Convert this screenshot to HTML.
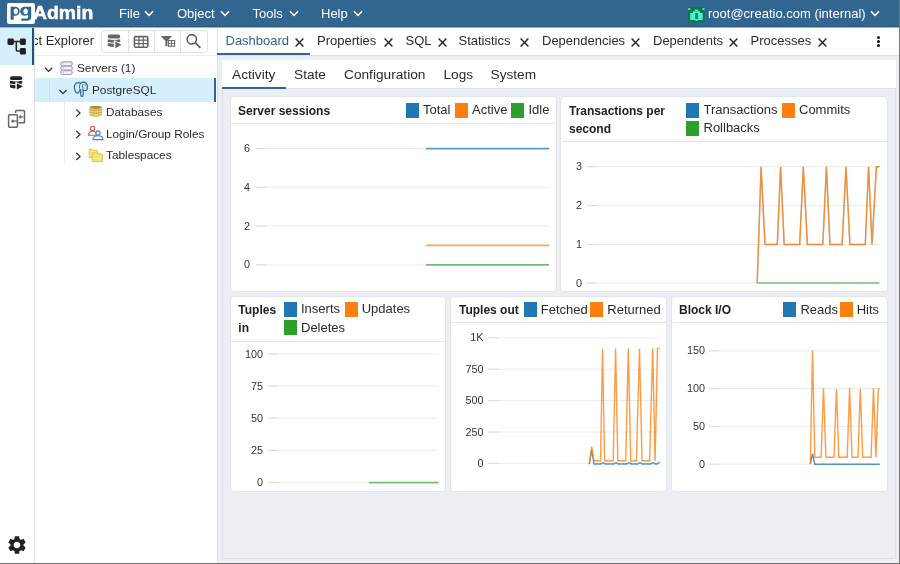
<!DOCTYPE html><html><head><meta charset="utf-8"><style>
*{box-sizing:border-box}
html,body{margin:0;padding:0}
body{width:900px;height:564px;position:relative;overflow:hidden;will-change:transform;background:#fff;font-family:"Liberation Sans",sans-serif;color:#2b2b2b}
.a{position:absolute}
.menu{color:#fff;font-size:13px;top:6px;white-space:nowrap;line-height:15px}
.tree{font-size:11.8px;color:#2b2b2b;white-space:nowrap;line-height:14px}
.tab{font-size:13px;color:#2b2b2b;top:33.3px;white-space:nowrap;line-height:15px}
.st{font-size:13.7px;color:#2b2b2b;top:67px;white-space:nowrap;line-height:16px}
.card{background:#fff;border:1px solid #e2e5ea;border-radius:4px}
.ctitle{font-size:12px;font-weight:bold;color:#222;line-height:18px;white-space:nowrap}
.leg{font-size:13px;color:#2b2b2b;white-space:nowrap;line-height:18px}
.sw{position:absolute;width:13px;height:15px}
.ax{font-size:10.8px;color:#333;text-align:right;white-space:nowrap;line-height:13px}
svg{position:absolute;overflow:visible}
</style></head><body>
<div class="a" style="left:0;top:0;width:899px;height:28px;background:#326690"></div>
<div class="a" style="left:0px;top:26px;width:899px;height:1px;background:#275b88"></div>
<div class="a" style="left:0px;top:27px;width:899px;height:1px;background:#9db3c8"></div>
<div class="a" style="left:7px;top:3px;width:28px;height:21px;background:#fff;border-radius:2px"></div>
<svg style="left:0;top:0" width="40" height="28" viewBox="0 0 40 28"><path fill="#326690" fill-rule="evenodd" d="M10.6 6.8 H15.2 A4.55 4.45 0 0 1 15.2 15.7 H13.7 V19.7 H10.6 Z M15.8 8.4 A2.1 2.9 0 1 0 15.8 14.2 A2.1 2.9 0 1 0 15.8 8.4 Z"/><path fill="#326690" fill-rule="evenodd" d="M24.7 6.8 H31.2 V17 Q31.2 20.8 26.8 20.8 H21.2 V18.5 H26.4 Q28.1 18.5 28.1 16.9 V14.6 Q27 15.7 24.7 15.7 A4.6 4.45 0 0 1 24.7 6.8 Z M25.6 8.4 A2.2 2.9 0 1 0 25.6 14.2 A2.2 2.9 0 1 0 25.6 8.4 Z"/></svg>
<div class="a" style="left:32.8px;top:2.8px;font-size:18px;font-weight:bold;color:#fff;line-height:20px;transform:scaleX(1.075);transform-origin:0 0;-webkit-text-stroke:0.5px #fff">Admin</div>
<div class="a menu" style="left:119px;top:5.5px;">File</div>
<svg style="left:143.5px;top:10px" width="10" height="7" viewBox="0 0 10 7"><path d="M1 1.3 L5.0 5.5 L9 1.3" fill="none" stroke="#fff" stroke-width="1.5"/></svg>
<div class="a menu" style="left:177px;top:5.5px;">Object</div>
<svg style="left:220.0px;top:10px" width="10" height="7" viewBox="0 0 10 7"><path d="M1 1.3 L5.0 5.5 L9 1.3" fill="none" stroke="#fff" stroke-width="1.5"/></svg>
<div class="a menu" style="left:252.5px;top:5.5px;">Tools</div>
<svg style="left:288.5px;top:10px" width="10" height="7" viewBox="0 0 10 7"><path d="M1 1.3 L5.0 5.5 L9 1.3" fill="none" stroke="#fff" stroke-width="1.5"/></svg>
<div class="a menu" style="left:321px;top:5.5px;">Help</div>
<svg style="left:352.5px;top:10px" width="10" height="7" viewBox="0 0 10 7"><path d="M1 1.3 L5.0 5.5 L9 1.3" fill="none" stroke="#fff" stroke-width="1.5"/></svg>
<svg style="left:688px;top:7px" width="16" height="15.5" viewBox="0 0 16 15.5"><rect x="0" y="0" width="16.4" height="15.4" fill="#0c7a3e"/><rect x="0.3" y="1" width="2" height="2" fill="#3fe3d8"/><rect x="14.5" y="1" width="2" height="2" fill="#3fe3d8"/><rect x="6.8" y="2.6" width="3.4" height="1.8" fill="#45eee0"/><rect x="5" y="4.3" width="7" height="1.8" fill="#45eee0"/><rect x="2.2" y="6" width="12.5" height="7" fill="#45eee0"/><rect x="7.3" y="6" width="2.5" height="6.4" fill="#0c7a3e"/><rect x="7.3" y="12.4" width="2.5" height="1.5" fill="#45eee0"/></svg>
<div class="a menu" style="left:708px;top:5.5px;">root@creatio.com (internal)</div>
<svg style="left:869.6px;top:10px" width="10" height="7" viewBox="0 0 10 7"><path d="M1 1.3 L5.0 5.5 L9 1.3" fill="none" stroke="#fff" stroke-width="1.5"/></svg>
<div class="a" style="left:899px;top:0;width:1px;height:564px;background:#757575"></div>
<div class="a" style="left:0;top:563px;width:900px;height:1px;background:#757575"></div>
<div class="a" style="left:0;top:28px;width:35px;height:535px;background:#fff;border-right:1px solid #dde0e6"></div>
<div class="a" style="left:0;top:28px;width:34px;height:37px;background:#d6effc;border-right:2px solid #1f5382"></div>
<svg style="left:0;top:28px" width="34" height="40" viewBox="0 0 34 40"><rect x="7.5" y="10.5" width="6.4" height="6.4" rx="1.3" fill="#222"/><rect x="19.9" y="10.5" width="6" height="6.4" rx="1.3" fill="#222"/><rect x="19.9" y="19.9" width="6" height="6.6" rx="1.3" fill="#222"/><path d="M13.5 13.6 H20 M16.3 13.6 V21.8 Q16.3 22.9 17.4 22.9 H20" stroke="#222" stroke-width="1.5" fill="none"/></svg>
<svg style="left:0;top:70px" width="34" height="25" viewBox="0 70 34 25"><rect x="10" y="76.2" width="12.2" height="3.9" rx="1.95" fill="#222"/><path d="M10 80.8 Q16.1 82.2 22.2 80.8 V83.5 Q16.1 84.9 10 83.5 Z" fill="#222"/><path d="M10 84.5 Q16.1 85.9 22.2 84.5 V87.4 Q16.1 89.4 10 87.4 Z" fill="#222"/><path d="M15.4 81.6 L25 86.4 L15.4 91.2 Z" fill="#fff"/><path d="M16.8 83.3 L23 86.4 L16.8 89.5 Z" fill="#222"/></svg>
<svg style="left:0;top:105px" width="34" height="30" viewBox="0 105 34 30"><path d="M15.6 113 V111.5 Q15.6 110.6 16.5 110.6 H23.6 Q24.5 110.6 24.5 111.5 V121.9 Q24.5 122.8 23.6 122.8 H18.4" stroke="#666" stroke-width="1.5" fill="none"/><rect x="8.6" y="114.8" width="8.8" height="12.4" rx="0.9" stroke="#666" stroke-width="1.5" fill="none"/><path d="M23.4 116.9 H19.6 M21 115.5 L19.5 116.9 L21 118.3" stroke="#666" stroke-width="1.3" fill="none"/><path d="M17.2 121.2 H12 M13.4 119.8 L11.9 121.2 L13.4 122.6" stroke="#666" stroke-width="1.3" fill="none"/></svg>
<svg style="left:5.6px;top:534px" width="22" height="22" viewBox="0 0 24 24"><path fill="#222" d="M19.14 12.94c.04-.3.06-.61.06-.94 0-.32-.02-.64-.07-.94l2.03-1.58c.18-.14.23-.41.12-.61l-1.92-3.32c-.12-.22-.37-.29-.59-.22l-2.39.96c-.5-.38-1.03-.7-1.62-.94l-.36-2.54c-.04-.24-.24-.41-.48-.41h-3.84c-.24 0-.43.17-.47.41l-.36 2.54c-.59.24-1.13.57-1.62.94l-2.39-.96c-.22-.08-.47 0-.59.22L2.74 8.87c-.12.21-.08.47.12.61l2.03 1.58c-.05.3-.09.63-.09.94s.02.64.07.94l-2.03 1.58c-.18.14-.23.41-.12.61l1.92 3.32c.12.22.37.29.59.22l2.39-.96c.5.38 1.03.7 1.62.94l.36 2.54c.05.24.24.41.48.41h3.84c.24 0 .44-.17.47-.41l.36-2.54c.59-.24 1.13-.56 1.62-.94l2.39.96c.22.08.47 0 .59-.22l1.92-3.32c.12-.22.07-.47-.12-.61l-2.01-1.58zM12 15.6c-1.98 0-3.6-1.62-3.6-3.6s1.62-3.6 3.6-3.6 3.6 1.62 3.6 3.6-1.62 3.6-3.6 3.6z"/></svg>
<div class="a" style="left:35px;top:28px;width:182px;height:535px;background:#fff;overflow:hidden"><div class="a" style="left:-30.5px;top:4.8px;font-size:13px;white-space:nowrap;line-height:15px;color:#2a2a2a">Object Explorer</div></div>
<div class="a" style="left:217px;top:28px;width:1px;height:535px;background:#dde0e6"></div>
<div class="a" style="left:35px;top:55px;width:182px;height:1px;background:#eceef2"></div>
<div class="a" style="left:101px;top:30px;width:107px;height:23px;border:1px solid #dde0e6;border-radius:4px"></div>
<div class="a" style="left:128px;top:31px;width:1px;height:21px;background:#dde0e6"></div>
<div class="a" style="left:154px;top:31px;width:1px;height:21px;background:#dde0e6"></div>
<div class="a" style="left:180px;top:31px;width:1px;height:21px;background:#dde0e6"></div>
<svg style="left:0;top:0" width="220" height="60" viewBox="0 0 220 60"><rect x="107.8" y="34.6" width="12.4" height="3.9" rx="1.95" fill="#666"/><path d="M107.8 39.2 Q114 40.6 120.2 39.2 V42 Q114 43.4 107.8 42 Z" fill="#666"/><path d="M107.8 43 Q114 44.4 120.2 43 V46.1 Q114 48.1 107.8 46.1 Z" fill="#666"/><path d="M113.9 39.9 L123.6 44.85 L113.9 49.8 Z" fill="#fff"/><path d="M115.3 41.4 L121.6 44.85 L115.3 48.3 Z" fill="#666"/><rect x="134.4" y="36.6" width="13.4" height="10.6" rx="1.4" stroke="#666" stroke-width="1.6" fill="none"/><path d="M134.4 40.2 H147.8 M134.4 43.6 H147.8 M138.9 36.6 V47.2 M143.3 36.6 V47.2" stroke="#666" stroke-width="1.2"/><path d="M160.8 36 H172 L167.4 41 V46.2 H165.4 V41 Z" fill="#666"/><rect x="168.4" y="40.6" width="6.2" height="5.6" stroke="#666" stroke-width="1.1" fill="#fff"/><path d="M168.4 43.4 H174.6 M171.5 40.6 V46.2" stroke="#666" stroke-width="0.9"/><circle cx="191.8" cy="39.3" r="4.7" stroke="#5a5a5a" stroke-width="1.6" fill="none"/><path d="M195.2 42.7 L200.4 47.8" stroke="#5a5a5a" stroke-width="1.7"/></svg>
<div class="a" style="left:35px;top:78px;width:181px;height:24px;background:#d6effc;border-right:2px solid #326690"></div>
<div class="a" style="left:49px;top:78px;width:1px;height:24px;background:#cde0ec"></div>
<div class="a" style="left:64px;top:102px;width:1px;height:63px;background:#eceef1"></div>
<svg style="left:0;top:55px" width="220" height="115" viewBox="0 55 220 115"><path d="M45 67.8 L48.6 71.4 L52.2 67.8" stroke="#333" stroke-width="1.3" fill="none"/><path d="M59.4 90 L63 93.6 L66.6 90" stroke="#333" stroke-width="1.3" fill="none"/><path d="M76.3 109.4 L80 113 L76.3 116.6" stroke="#333" stroke-width="1.3" fill="none"/><path d="M76.3 130.9 L80 134.5 L76.3 138.1" stroke="#333" stroke-width="1.3" fill="none"/><path d="M76.3 152.8 L80 156.4 L76.3 160" stroke="#333" stroke-width="1.3" fill="none"/><rect x="60.7" y="61.9" width="11.6" height="3.8" rx="1.9" fill="#f3f2f9" stroke="#9f9bbf" stroke-width="1.1"/><rect x="60.7" y="66.3" width="11.6" height="3.8" rx="1.9" fill="#f3f2f9" stroke="#9f9bbf" stroke-width="1.1"/><rect x="60.7" y="70.7" width="11.6" height="3.8" rx="1.9" fill="#f3f2f9" stroke="#9f9bbf" stroke-width="1.1"/><path d="M62.6 63.8 H63.6 M62.6 68.2 H63.6 M62.6 72.6 H63.6" stroke="#9f9bbf" stroke-width="0.9"/><path d="M78 82.6 Q74.2 83 74.4 87.6 Q74.8 92 77.4 93.2 Q78.6 93.4 79 91.6 Q79.4 90 80.6 89.6 L80.8 95.6 Q81.2 96.6 82.4 96.4 Q83.4 96 83.2 94 L83 89.6 Q84.6 91 86.4 90.4 Q87.8 89 87.4 85.6 Q86.4 82.4 83.4 82.2 Q81.4 82.4 80.6 83.4 Q79.4 82.4 78 82.6 Z" fill="none" stroke="#336791" stroke-width="1.2"/><path d="M80.6 83.6 Q78.8 85.6 79.6 88.6 M83 84 Q82 86 83 88.6 M85.2 84.4 L85.4 85.6" fill="none" stroke="#336791" stroke-width="1"/><ellipse cx="95.7" cy="107.6" rx="6.3" ry="1.9" fill="#a89334"/><path d="M89.4 107.6 V115.4 Q95.7 118.2 102 115.4 V107.6 Q95.7 110.4 89.4 107.6 Z" fill="#d9c462"/><path d="M89.4 110.4 Q95.7 113 102 110.4 M89.4 113 Q95.7 115.6 102 113" stroke="#fff4c0" stroke-width="0.9" fill="none"/><path d="M89.4 109.9 Q95.7 112.5 102 109.9 M89.4 112.5 Q95.7 115.1 102 112.5" stroke="#a89334" stroke-width="0.7" fill="none"/><circle cx="92.6" cy="128.4" r="2.1" fill="#fff" stroke="#d9534f" stroke-width="1.1"/><path d="M88.6 135.2 Q88.6 131.2 92.6 131.2 Q96.6 131.2 96.6 135.2 Z" fill="#fff" stroke="#d9534f" stroke-width="1.1"/><circle cx="98" cy="133" r="2.1" fill="#fff" stroke="#3f7fd0" stroke-width="1.1"/><path d="M93 139.6 Q93 135.8 98 135.8 Q103 135.8 103 139.6 Z" fill="#fff" stroke="#3f7fd0" stroke-width="1.1"/><path d="M89.2 149.2 H92.6 L93.6 150.4 H97.6 V157.6 H89.2 Z" fill="#f4e57a" stroke="#d6c23a" stroke-width="0.9"/><path d="M92.2 152.8 H95.6 L96.6 154 H102.4 V161.6 H92.2 Z" fill="#f4e57a" stroke="#d6c23a" stroke-width="0.9"/></svg>
<div class="a tree" style="left:77px;top:61px;">Servers (1)</div>
<div class="a tree" style="left:92px;top:83px;">PostgreSQL</div>
<div class="a tree" style="left:106px;top:105px;">Databases</div>
<div class="a tree" style="left:106px;top:127px;">Login/Group Roles</div>
<div class="a tree" style="left:106px;top:148px;">Tablespaces</div>
<div class="a" style="left:218px;top:28px;width:681px;height:28px;background:#fff;border-bottom:1px solid #dde0e6"></div>
<div class="a" style="left:217px;top:53px;width:93px;height:2px;background:#326690"></div>
<div class="a tab" style="left:225.5px;top:33.4px;color:#326690">Dashboard</div>
<div class="a tab" style="left:317px;top:33.4px;">Properties</div>
<div class="a tab" style="left:405.5px;top:33.4px;">SQL</div>
<div class="a tab" style="left:458.5px;top:33.4px;">Statistics</div>
<div class="a tab" style="left:542px;top:33.4px;">Dependencies</div>
<div class="a tab" style="left:653px;top:33.4px;">Dependents</div>
<div class="a tab" style="left:750.5px;top:33.4px;">Processes</div>
<svg style="left:295.3px;top:37.5px" width="9" height="9" viewBox="0 0 9 9"><path d="M0.6 0.6 L8.4 8.4 M8.4 0.6 L0.6 8.4" stroke="#222" stroke-width="1.4"/></svg>
<svg style="left:384.1px;top:37.5px" width="9" height="9" viewBox="0 0 9 9"><path d="M0.6 0.6 L8.4 8.4 M8.4 0.6 L0.6 8.4" stroke="#222" stroke-width="1.4"/></svg>
<svg style="left:437.8px;top:37.5px" width="9" height="9" viewBox="0 0 9 9"><path d="M0.6 0.6 L8.4 8.4 M8.4 0.6 L0.6 8.4" stroke="#222" stroke-width="1.4"/></svg>
<svg style="left:520px;top:37.5px" width="9" height="9" viewBox="0 0 9 9"><path d="M0.6 0.6 L8.4 8.4 M8.4 0.6 L0.6 8.4" stroke="#222" stroke-width="1.4"/></svg>
<svg style="left:630.5px;top:37.5px" width="9" height="9" viewBox="0 0 9 9"><path d="M0.6 0.6 L8.4 8.4 M8.4 0.6 L0.6 8.4" stroke="#222" stroke-width="1.4"/></svg>
<svg style="left:728.5px;top:37.5px" width="9" height="9" viewBox="0 0 9 9"><path d="M0.6 0.6 L8.4 8.4 M8.4 0.6 L0.6 8.4" stroke="#222" stroke-width="1.4"/></svg>
<svg style="left:818px;top:37.5px" width="9" height="9" viewBox="0 0 9 9"><path d="M0.6 0.6 L8.4 8.4 M8.4 0.6 L0.6 8.4" stroke="#222" stroke-width="1.4"/></svg>
<div class="a" style="left:877.3px;top:35.5px;width:3px;height:3px;border-radius:50%;background:#111"></div>
<div class="a" style="left:877.3px;top:39.9px;width:3px;height:3px;border-radius:50%;background:#111"></div>
<div class="a" style="left:877.3px;top:44.4px;width:3px;height:3px;border-radius:50%;background:#111"></div>
<div class="a" style="left:218px;top:56px;width:681px;height:507px;background:#ebeef3"></div>
<div class="a" style="left:222px;top:60px;width:674px;height:499px;border:1px solid #dde0e6"></div>
<div class="a" style="left:222px;top:60px;width:674px;height:29px;background:#fff;border-bottom:1px solid #dde0e6"></div>
<div class="a" style="left:222px;top:87px;width:64px;height:2px;background:#326690"></div>
<div class="a st" style="left:232px;top:67px;">Activity</div>
<div class="a st" style="left:294px;top:67px;">State</div>
<div class="a st" style="left:344px;top:67px;">Configuration</div>
<div class="a st" style="left:443.5px;top:67px;">Logs</div>
<div class="a st" style="left:490.5px;top:67px;">System</div>
<div class="a card" style="left:230px;top:96px;width:327px;height:196px"></div>
<div class="a card" style="left:560px;top:96px;width:328px;height:196px"></div>
<div class="a card" style="left:230px;top:296px;width:216px;height:196px"></div>
<div class="a card" style="left:450px;top:296px;width:217px;height:196px"></div>
<div class="a card" style="left:671px;top:296px;width:217px;height:196px"></div>
<div class="a ctitle" style="left:238px;top:102px;">Server sessions</div>
<div class="a" style="left:231px;top:123px;width:325px;height:1px;background:#e3e6eb"></div>
<div class="sw" style="left:405.5px;top:102.5px;background:#1f77b4"></div><div class="a leg" style="left:423px;top:101.0px">Total</div><div class="sw" style="left:455px;top:102.5px;background:#ff7f0e"></div><div class="a leg" style="left:472px;top:101.0px">Active</div><div class="sw" style="left:511px;top:102.5px;background:#2ca02c"></div><div class="a leg" style="left:528.5px;top:101.0px">Idle</div>
<svg style="left:0;top:0" width="900" height="564"><line x1="256" y1="148.5" x2="549" y2="148.5" stroke="#ebebeb" stroke-width="1"/><line x1="256" y1="148.5" x2="266" y2="148.5" stroke="#dcdcdc" stroke-width="1"/><line x1="256" y1="187.3" x2="549" y2="187.3" stroke="#ebebeb" stroke-width="1"/><line x1="256" y1="187.3" x2="266" y2="187.3" stroke="#dcdcdc" stroke-width="1"/><line x1="256" y1="226.1" x2="549" y2="226.1" stroke="#ebebeb" stroke-width="1"/><line x1="256" y1="226.1" x2="266" y2="226.1" stroke="#dcdcdc" stroke-width="1"/><line x1="256" y1="264.9" x2="549" y2="264.9" stroke="#ebebeb" stroke-width="1"/><line x1="256" y1="264.9" x2="266" y2="264.9" stroke="#dcdcdc" stroke-width="1"/></svg><div class="a ax" style="left:210px;top:142.0px;width:40px">6</div><div class="a ax" style="left:210px;top:180.8px;width:40px">4</div><div class="a ax" style="left:210px;top:219.6px;width:40px">2</div><div class="a ax" style="left:210px;top:258.4px;width:40px">0</div>
<svg style="left:0;top:0" width="900" height="564"><polyline points="426,148.6 549,148.6" fill="none" stroke="#1f77b4" stroke-opacity="0.72" stroke-width="1.7" stroke-linejoin="miter"/></svg>
<svg style="left:0;top:0" width="900" height="564"><polyline points="426,245.3 549,245.3" fill="none" stroke="#ff7f0e" stroke-opacity="0.72" stroke-width="1.7" stroke-linejoin="miter"/></svg>
<svg style="left:0;top:0" width="900" height="564"><polyline points="426,264.9 549,264.9" fill="none" stroke="#2ca02c" stroke-opacity="0.65" stroke-width="1.7" stroke-linejoin="miter"/></svg>
<div class="a ctitle" style="left:569px;top:102px;">Transactions per<br>second</div>
<div class="a" style="left:562px;top:141px;width:325px;height:1px;background:#e3e6eb"></div>
<div class="sw" style="left:686px;top:102.5px;background:#1f77b4"></div><div class="a leg" style="left:703.5px;top:101.0px">Transactions</div><div class="sw" style="left:782px;top:102.5px;background:#ff7f0e"></div><div class="a leg" style="left:799px;top:101.0px">Commits</div><div class="sw" style="left:686px;top:120.5px;background:#2ca02c"></div><div class="a leg" style="left:703.5px;top:119.0px">Rollbacks</div>
<svg style="left:0;top:0" width="900" height="564"><line x1="587" y1="166.7" x2="879.4" y2="166.7" stroke="#ebebeb" stroke-width="1"/><line x1="587" y1="166.7" x2="597" y2="166.7" stroke="#dcdcdc" stroke-width="1"/><line x1="587" y1="205.6" x2="879.4" y2="205.6" stroke="#ebebeb" stroke-width="1"/><line x1="587" y1="205.6" x2="597" y2="205.6" stroke="#dcdcdc" stroke-width="1"/><line x1="587" y1="244.5" x2="879.4" y2="244.5" stroke="#ebebeb" stroke-width="1"/><line x1="587" y1="244.5" x2="597" y2="244.5" stroke="#dcdcdc" stroke-width="1"/><line x1="587" y1="283" x2="879.4" y2="283" stroke="#ebebeb" stroke-width="1"/><line x1="587" y1="283" x2="597" y2="283" stroke="#dcdcdc" stroke-width="1"/></svg><div class="a ax" style="left:542px;top:160.2px;width:40px">3</div><div class="a ax" style="left:542px;top:199.1px;width:40px">2</div><div class="a ax" style="left:542px;top:238.0px;width:40px">1</div><div class="a ax" style="left:542px;top:276.5px;width:40px">0</div>
<svg style="left:0;top:0" width="900" height="564"><polyline points="757.2,283 761.1,166.7 765,244.5 777.3,244.5 780.6,166.7 784.2,244.5 799.7,244.5 803.3,166.7 807.4,244.5 822.8,244.5 826.4,166.7 830,244.5 842.1,244.5 846,166.7 849.9,244.5 865.3,244.5 868.6,166.7 872,244.5 876.4,166.7 879.4,166.7" fill="none" stroke="#1f77b4" stroke-opacity="0.35" stroke-width="1.4" stroke-linejoin="miter"/></svg>
<svg style="left:0;top:0" width="900" height="564"><polyline points="757.2,283 879.4,283" fill="none" stroke="#2ca02c" stroke-opacity="0.62" stroke-width="1.6" stroke-linejoin="miter"/></svg>
<svg style="left:0;top:0" width="900" height="564"><polyline points="757.2,283 761.1,166.7 765,244.5 777.3,244.5 780.6,166.7 784.2,244.5 799.7,244.5 803.3,166.7 807.4,244.5 822.8,244.5 826.4,166.7 830,244.5 842.1,244.5 846,166.7 849.9,244.5 865.3,244.5 868.6,166.7 872,244.5 876.4,166.7 879.4,166.7" fill="none" stroke="#ff7f0e" stroke-opacity="0.78" stroke-width="1.5" stroke-linejoin="miter"/></svg>
<div class="a ctitle" style="left:238.3px;top:301px;">Tuples<br>in</div>
<div class="a" style="left:231px;top:341px;width:214px;height:1px;background:#e3e6eb"></div>
<div class="sw" style="left:284.3px;top:301.5px;background:#1f77b4"></div><div class="a leg" style="left:301px;top:300.0px">Inserts</div><div class="sw" style="left:344.6px;top:301.5px;background:#ff7f0e"></div><div class="a leg" style="left:361.7px;top:300.0px">Updates</div><div class="sw" style="left:284.3px;top:320px;background:#2ca02c"></div><div class="a leg" style="left:301px;top:318.5px">Deletes</div>
<svg style="left:0;top:0" width="900" height="564"><line x1="268" y1="354" x2="438.4" y2="354" stroke="#ebebeb" stroke-width="1"/><line x1="268" y1="354" x2="278" y2="354" stroke="#dcdcdc" stroke-width="1"/><line x1="268" y1="386.1" x2="438.4" y2="386.1" stroke="#ebebeb" stroke-width="1"/><line x1="268" y1="386.1" x2="278" y2="386.1" stroke="#dcdcdc" stroke-width="1"/><line x1="268" y1="418.2" x2="438.4" y2="418.2" stroke="#ebebeb" stroke-width="1"/><line x1="268" y1="418.2" x2="278" y2="418.2" stroke="#dcdcdc" stroke-width="1"/><line x1="268" y1="450.3" x2="438.4" y2="450.3" stroke="#ebebeb" stroke-width="1"/><line x1="268" y1="450.3" x2="278" y2="450.3" stroke="#dcdcdc" stroke-width="1"/><line x1="268" y1="482.4" x2="438.4" y2="482.4" stroke="#ebebeb" stroke-width="1"/><line x1="268" y1="482.4" x2="278" y2="482.4" stroke="#dcdcdc" stroke-width="1"/></svg><div class="a ax" style="left:223px;top:347.5px;width:40px">100</div><div class="a ax" style="left:223px;top:379.6px;width:40px">75</div><div class="a ax" style="left:223px;top:411.7px;width:40px">50</div><div class="a ax" style="left:223px;top:443.8px;width:40px">25</div><div class="a ax" style="left:223px;top:475.9px;width:40px">0</div>
<svg style="left:0;top:0" width="900" height="564"><polyline points="368.9,482.6 438.4,482.6" fill="none" stroke="#2ca02c" stroke-opacity="0.62" stroke-width="1.8" stroke-linejoin="miter"/></svg>
<div class="a ctitle" style="left:459px;top:301px;">Tuples out</div>
<div class="a" style="left:451px;top:322px;width:215px;height:1px;background:#e3e6eb"></div>
<div class="sw" style="left:523.5px;top:302px;background:#1f77b4"></div><div class="a leg" style="left:540.8px;top:300.5px">Fetched</div><div class="sw" style="left:590px;top:302px;background:#ff7f0e"></div><div class="a leg" style="left:607.3px;top:300.5px">Returned</div>
<svg style="left:0;top:0" width="900" height="564"><line x1="488.4" y1="337.8" x2="659" y2="337.8" stroke="#ebebeb" stroke-width="1"/><line x1="488.4" y1="337.8" x2="498.4" y2="337.8" stroke="#dcdcdc" stroke-width="1"/><line x1="488.4" y1="369.2" x2="659" y2="369.2" stroke="#ebebeb" stroke-width="1"/><line x1="488.4" y1="369.2" x2="498.4" y2="369.2" stroke="#dcdcdc" stroke-width="1"/><line x1="488.4" y1="400.6" x2="659" y2="400.6" stroke="#ebebeb" stroke-width="1"/><line x1="488.4" y1="400.6" x2="498.4" y2="400.6" stroke="#dcdcdc" stroke-width="1"/><line x1="488.4" y1="432" x2="659" y2="432" stroke="#ebebeb" stroke-width="1"/><line x1="488.4" y1="432" x2="498.4" y2="432" stroke="#dcdcdc" stroke-width="1"/><line x1="488.4" y1="463.4" x2="659" y2="463.4" stroke="#ebebeb" stroke-width="1"/><line x1="488.4" y1="463.4" x2="498.4" y2="463.4" stroke="#dcdcdc" stroke-width="1"/></svg><div class="a ax" style="left:443.5px;top:331.3px;width:40px">1K</div><div class="a ax" style="left:443.5px;top:362.7px;width:40px">750</div><div class="a ax" style="left:443.5px;top:394.1px;width:40px">500</div><div class="a ax" style="left:443.5px;top:425.5px;width:40px">250</div><div class="a ax" style="left:443.5px;top:456.9px;width:40px">0</div>
<svg style="left:0;top:0" width="900" height="564"><polyline points="589.3,464 591.7,450 594,464 601,464 603,462.5 605,464 614,464 616,462.5 618,464 627,464 629,462.5 631,464 638,464 640,462.5 642,464 651,464 653,462.5 655,464 657.5,464 659.6,462" fill="none" stroke="#1f77b4" stroke-opacity="0.78" stroke-width="1.4" stroke-linejoin="miter"/></svg>
<svg style="left:0;top:0" width="900" height="564"><polyline points="589.3,464.4 591.7,446.5 594.1,460.8 600.6,460.8 602.5,348.4 604.6,460.8 613.2,460.8 615.6,348.4 617.8,460.8 625.7,460.8 628.3,348.4 630.7,460.8 636.4,460.8 639.5,348.4 642,460.8 649.6,460.8 652.7,348.4 655.1,460.8 657.5,348.4 659.6,348.4" fill="none" stroke="#ff7f0e" stroke-opacity="0.78" stroke-width="1.4" stroke-linejoin="miter"/></svg>
<div class="a ctitle" style="left:679px;top:301px;">Block I/O</div>
<div class="a" style="left:673px;top:322px;width:214px;height:1px;background:#e3e6eb"></div>
<div class="sw" style="left:783px;top:302px;background:#1f77b4"></div><div class="a leg" style="left:800.4px;top:300.5px">Reads</div><div class="sw" style="left:840px;top:302px;background:#ff7f0e"></div><div class="a leg" style="left:856.7px;top:300.5px">Hits</div>
<svg style="left:0;top:0" width="900" height="564"><line x1="709" y1="350.8" x2="879.7" y2="350.8" stroke="#ebebeb" stroke-width="1"/><line x1="709" y1="350.8" x2="719" y2="350.8" stroke="#dcdcdc" stroke-width="1"/><line x1="709" y1="388.6" x2="879.7" y2="388.6" stroke="#ebebeb" stroke-width="1"/><line x1="709" y1="388.6" x2="719" y2="388.6" stroke="#dcdcdc" stroke-width="1"/><line x1="709" y1="426.4" x2="879.7" y2="426.4" stroke="#ebebeb" stroke-width="1"/><line x1="709" y1="426.4" x2="719" y2="426.4" stroke="#dcdcdc" stroke-width="1"/><line x1="709" y1="464.2" x2="879.7" y2="464.2" stroke="#ebebeb" stroke-width="1"/><line x1="709" y1="464.2" x2="719" y2="464.2" stroke="#dcdcdc" stroke-width="1"/></svg><div class="a ax" style="left:665px;top:344.3px;width:40px">150</div><div class="a ax" style="left:665px;top:382.1px;width:40px">100</div><div class="a ax" style="left:665px;top:419.9px;width:40px">50</div><div class="a ax" style="left:665px;top:457.7px;width:40px">0</div>
<svg style="left:0;top:0" width="900" height="564"><polyline points="810.3,464.2 812.5,453.7 814.8,464.2 879.7,464.2" fill="none" stroke="#1f77b4" stroke-opacity="0.78" stroke-width="1.4" stroke-linejoin="miter"/></svg>
<svg style="left:0;top:0" width="900" height="564"><polyline points="810.3,464.2 812.5,350.5 814.8,457.3 821.1,457.3 823.5,388.2 825.9,457.3 834,457.3 836.4,389 838.8,457.3 847.2,457.3 849.6,388.2 852,457.3 858,457.3 860.3,389 862.7,457.3 871.1,457.3 873.5,388.2 875.9,457.3 878.3,389 879.7,388.5" fill="none" stroke="#ff7f0e" stroke-opacity="0.78" stroke-width="1.4" stroke-linejoin="miter"/></svg>
</body></html>
